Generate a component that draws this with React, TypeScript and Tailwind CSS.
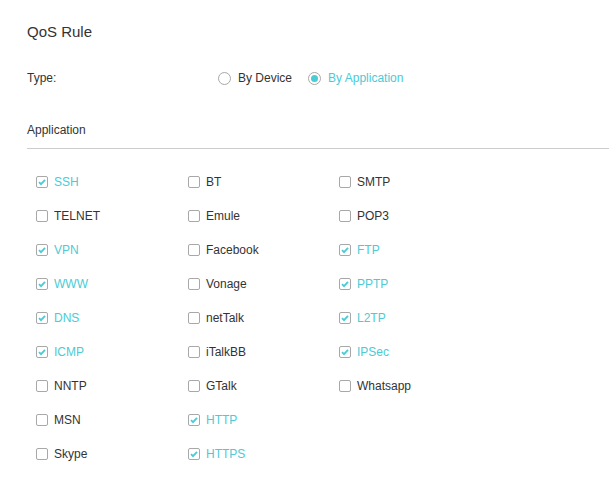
import { useState } from 'react';

type App = { name: string; checked: boolean };

const columns: App[][] = [
   [
      { name: 'SSH', checked: true },
      { name: 'TELNET', checked: false },
      { name: 'VPN', checked: true },
      { name: 'WWW', checked: true },
      { name: 'DNS', checked: true },
      { name: 'ICMP', checked: true },
      { name: 'NNTP', checked: false },
      { name: 'MSN', checked: false },
      { name: 'Skype', checked: false },
   ],
   [
      { name: 'BT', checked: false },
      { name: 'Emule', checked: false },
      { name: 'Facebook', checked: false },
      { name: 'Vonage', checked: false },
      { name: 'netTalk', checked: false },
      { name: 'iTalkBB', checked: false },
      { name: 'GTalk', checked: false },
      { name: 'HTTP', checked: true },
      { name: 'HTTPS', checked: true },
   ],
   [
      { name: 'SMTP', checked: false },
      { name: 'POP3', checked: false },
      { name: 'FTP', checked: true },
      { name: 'PPTP', checked: true },
      { name: 'L2TP', checked: true },
      { name: 'IPSec', checked: true },
      { name: 'Whatsapp', checked: false },
   ],
];

const Radio = ({ label, on, onClick }: { label: string; on: boolean; onClick: () => void }) => (
   <button onClick={onClick} className="flex items-center h-[20px]">
      <span className="flex items-center justify-center w-[13px] h-[13px] rounded-full border border-[#a8a8a8] bg-white">
         {on && <span className="w-[7px] h-[7px] rounded-full bg-[#4acbd6]" />}
      </span>
      <span className={`ml-[7px] text-[12px] ${on ? 'text-[#4acbd6]' : 'text-[#333333]'}`}>{label}</span>
   </button>
);

const Check = ({ item, toggle }: { item: App; toggle: () => void }) => (
   <button onClick={toggle} className="flex items-center h-[34px]">
      <span className="flex items-center justify-center w-[12px] h-[12px] rounded-[2px] border border-[#a8a8a8] bg-white">
         {item.checked && (
            <svg width="10" height="10" viewBox="0 0 10 10">
               <path d="M2 5.2 L4 7.2 L8 2.8" fill="none" stroke="#4acbd6" strokeWidth="1.8" />
            </svg>
         )}
      </span>
      <span className={`ml-[6px] text-[12px] ${item.checked ? 'text-[#4acbd6]' : 'text-[#333333]'}`}>
         {item.name}
      </span>
   </button>
);

export default function App() {
   const [byApp, setByApp] = useState(true);
   const [cols, setCols] = useState(columns);

   const toggle = (c: number, i: number) =>
      setCols((prev) =>
         prev.map((col, ci) =>
            ci !== c ? col : col.map((it, ii) => (ii === i ? { ...it, checked: !it.checked } : it)),
         ),
      );

   return (
      <main className="w-[609px] h-[496px] bg-white pl-[27px] pt-[23px] font-['Liberation_Sans',Arial,sans-serif] text-[#333333] overflow-hidden">
         <h2 className="text-[15px] leading-[17px]">QoS Rule</h2>

         {/* type selector */}
         <div className="flex items-center mt-[28px] h-[20px]">
            <span className="w-[191px] text-[12px]">Type:</span>
            <Radio label="By Device" on={!byApp} onClick={() => setByApp(false)} />
            <div className="ml-[16px]">
               <Radio label="By Application" on={byApp} onClick={() => setByApp(true)} />
            </div>
         </div>

         <div className="mt-[34px] pb-[10px] border-b border-[#cccccc] text-[12px] leading-[16px]">Application</div>

         {/* application list */}
         <div className="flex mt-[16px] pl-[9px]">
            {cols.map((col, c) => (
               <div key={c} className={`flex flex-col ${c === 0 ? 'w-[152px]' : c === 1 ? 'w-[151px]' : 'flex-1'}`}>
                  {col.map((item, i) => (
                     <Check key={item.name} item={item} toggle={() => toggle(c, i)} />
                  ))}
               </div>
            ))}
         </div>
      </main>
   );
}
